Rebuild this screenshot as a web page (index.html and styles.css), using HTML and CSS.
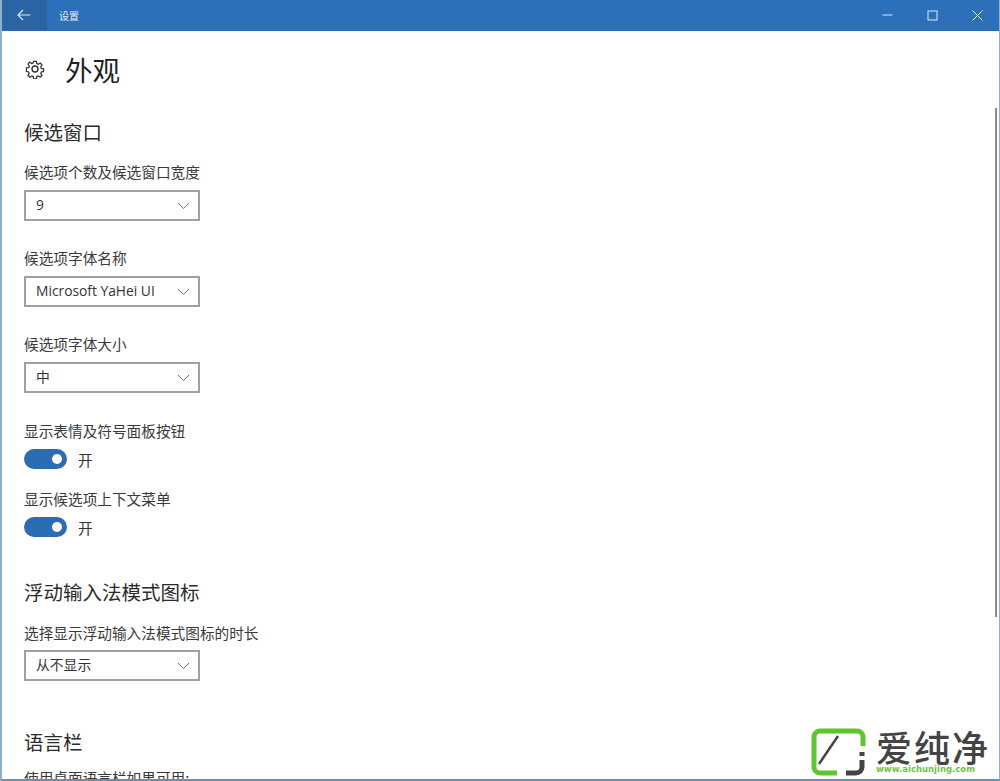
FILE: index.html
```html
<!DOCTYPE html>
<html lang="zh-CN">
<head>
<meta charset="utf-8">
<title>设置</title>
<link rel="stylesheet" href="styles.css">
</head>
<body>
<div class="window">
  <header class="titlebar">
    <div class="back">
      <svg width="14" height="12" viewBox="0 0 14 12"><path d="M6 1 1 6l5 5M1 6h12.500" fill="none" stroke="#dbe8f5" stroke-width="1.200"/></svg>
    </div>
    <div class="app-title">设置</div>
    <div class="controls">
      <div class="ctl"><svg width="11" height="11" viewBox="0 0 11 11"><path d="M0.500 5h10" stroke="#dbe8f5" stroke-width="1"/></svg></div>
      <div class="ctl"><svg width="11" height="11" viewBox="0 0 11 11"><rect x="1" y="1" width="9" height="9" fill="none" stroke="#dbe8f5" stroke-width="1"/></svg></div>
      <div class="ctl"><svg width="11" height="11" viewBox="0 0 11 11"><path d="M0.500 0.500l10 10M10.500 0.500l-10 10" stroke="#e6eff8" stroke-width="1"/></svg></div>
    </div>
  </header>
  <main class="content">
    <div class="page-head">
      <svg class="gear" width="20" height="20" viewBox="0 0 20 20"><g fill="none" stroke="#333" stroke-width="1.400"><path d="M8.500 1.500h3l.5 2.600 1.500.7 2.300-1.400 2 2.100-1.400 2.200.6 1.500 2.500.6v2.900l-2.500.6-.6 1.500 1.400 2.200-2 2.100-2.300-1.400-1.500.7-.5 2.500h-3l-.5-2.500-1.500-.7-2.300 1.400-2-2.100 1.400-2.200-.6-1.500-2.500-.6V8.800l2.500-.6.600-1.500-1.400-2.200 2-2.100 2.300 1.400 1.500-.7z" transform="translate(1 1) scale(.9)"/><circle cx="10" cy="10" r="3"/></g></svg>
      <h1 class="page-title">外观</h1>
    </div>

    <h2 class="section first">候选窗口</h2>
    <div class="label">候选项个数及候选窗口宽度</div>
    <div class="select"><span>9</span><svg class="chev" width="13" height="8" viewBox="0 0 13 8"><path d="M1 1l5.500 5.500L12 1" fill="none" stroke="#777" stroke-width="1"/></svg></div>
    <div class="label gap">候选项字体名称</div>
    <div class="select"><span>Microsoft YaHei UI</span><svg class="chev" width="13" height="8" viewBox="0 0 13 8"><path d="M1 1l5.500 5.500L12 1" fill="none" stroke="#777" stroke-width="1"/></svg></div>
    <div class="label gap">候选项字体大小</div>
    <div class="select"><span>中</span><svg class="chev" width="13" height="8" viewBox="0 0 13 8"><path d="M1 1l5.500 5.500L12 1" fill="none" stroke="#777" stroke-width="1"/></svg></div>

    <div class="label gap-toggle">显示表情及符号面板按钮</div>
    <div class="toggle-row"><span class="toggle"><i class="knob"></i></span><span class="toggle-text">开</span></div>
    <div class="label gap-toggle2">显示候选项上下文菜单</div>
    <div class="toggle-row"><span class="toggle"><i class="knob"></i></span><span class="toggle-text">开</span></div>

    <h2 class="section second">浮动输入法模式图标</h2>
    <div class="label after-second">选择显示浮动输入法模式图标的时长</div>
    <div class="select tight"><span>从不显示</span><svg class="chev" width="13" height="8" viewBox="0 0 13 8"><path d="M1 1l5.500 5.500L12 1" fill="none" stroke="#777" stroke-width="1"/></svg></div>

    <h2 class="section third">语言栏</h2>
    <div class="label clipped">使用桌面语言栏如果可用:</div>
  </main>
  <div class="scrollbar"></div>
  <div class="watermark">
    <svg class="wm-icon" width="56" height="48" viewBox="0 0 56 48">
      <path d="M22 3H9a6 6 0 0 0-6 6v30a6 6 0 0 0 6 6h17" fill="none" stroke="#5fc52e" stroke-width="5"/>
      <path d="M22 3h24a6 6 0 0 1 6 6v9" fill="none" stroke="#5fc52e" stroke-width="5"/>
      <path d="M8 36 27 8" stroke="#444" stroke-width="2.500"/>
      <path d="M51 24v4M51 32v7a6 6 0 0 1-6 6h-10" fill="none" stroke="#444" stroke-width="5"/>
    </svg>
    <div class="wm-text">
      <div class="wm-cn">爱纯净</div>
      <div class="wm-url">www.aichunjing.com</div>
    </div>
  </div>
</div>
</body>
</html>
```
FILE: styles.css
```css
html, body { margin: 0; padding: 0; height: 100%; background: #fff; overflow: hidden; }
body { font-family: "Noto Sans CJK SC", "Liberation Sans", sans-serif; color: #333; }
.window { position: relative; width: 1000px; height: 781px; box-sizing: border-box; display: flex; flex-direction: column; overflow: hidden; border-left: 2px solid #8fb0c8; border-right: 1px solid #8fb0c8; border-bottom: 2px solid #5d92bf; }
.titlebar { flex: none; height: 30px; margin: 0 -1px 0 -2px; background: #2b70b8; border-bottom: 1px solid #2a69ab; display: flex; align-items: center; color: #e3edf7; }
.back { width: 47px; height: 30px; background: #2a64a4; display: flex; align-items: center; justify-content: center; }
.app-title { margin-left: 12px; font-size: 10px; }
.controls { margin-left: auto; display: flex; }
.ctl { width: 45px; height: 30px; display: flex; align-items: center; justify-content: center; }
.content { flex: 1; padding-left: 22px; overflow: hidden; }
.page-head { display: flex; align-items: center; height: 40px; margin-top: 18px; }
.gear { margin-left: 1px; }
.page-title { margin: 0 0 0 20px; font-size: 27.500px; font-weight: 400; line-height: 40px; color: #222; }
.section { margin: 0; font-size: 19.500px; font-weight: 400; line-height: 28px; color: #2b2b2b; }
.section.first { margin-top: 29px; }
.section.second { margin-top: 41px; }
.section.third { margin-top: 47px; }
.label { font-size: 14.670px; line-height: 20px; margin-top: 16px; color: #3a3a3a; }
.label.gap { margin-top: 27px; }
.label.gap-toggle { margin-top: 28px; }
.label.gap-toggle2 { margin-top: 20px; }
.label.after-second { margin-top: 17px; }
.label.clipped { margin-top: 12px; }
.select { box-sizing: border-box; width: 176px; height: 31px; margin-top: 8px; padding: 0 8px 0 10px; border: 2px solid #a0a0a0; display: flex; align-items: center; justify-content: space-between; font-size: 14.670px; color: #333; background: #fff; }
.select.tight { margin-top: 7px; }
.select span { font-family: "Open Sans", "Noto Sans CJK SC", sans-serif; font-size: 13.800px; line-height: 25px; position: relative; top: -1px; }
.toggle-row { display: flex; align-items: center; margin-top: 8px; height: 20px; }
.toggle { display: block; position: relative; width: 43px; height: 20px; border-radius: 10px; background: #2b6cb3; }
.knob { position: absolute; right: 5px; top: 5px; width: 10px; height: 10px; border-radius: 50%; background: #fff; }
.toggle-text { margin-left: 11px; font-size: 14.670px; }
.scrollbar { position: absolute; right: 2px; top: 108px; width: 2px; height: 509px; background: #8a8a8a; }
.watermark { position: absolute; right: -1px; bottom: -2px; width: 200px; height: 59px; background: #fff; display: flex; align-items: center; }
.wm-icon { margin-left: 11px; flex: none; }
.wm-text { margin-left: 9px; display: flex; flex-direction: column; }
.wm-cn { font-size: 36px; line-height: 36px; color: #444; letter-spacing: 2px; font-weight: 500; white-space: nowrap; }
.wm-url { font-family: "DejaVu Sans", sans-serif; font-size: 8.500px; font-weight: 700; line-height: 11px; color: #6fc43c; white-space: nowrap; }
```
